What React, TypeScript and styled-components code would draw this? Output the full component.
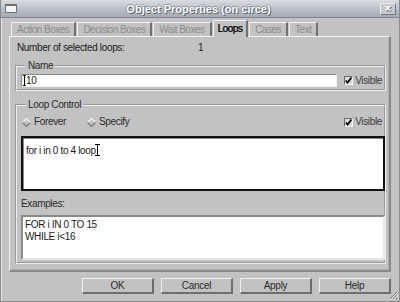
import React from "react";
import styled, { createGlobalStyle } from "styled-components";

const GlobalStyle = createGlobalStyle`
  html, body {
    margin: 0;
    padding: 0;
    background: #c0c0c0;
  }
  body {
    font-family: "Liberation Sans", Arial, Helvetica, sans-serif;
    font-size: 10px;
    letter-spacing: -0.35px;
    color: #1a1a1a;
  }
  * {
    box-sizing: border-box;
  }
`;

const Window = styled.div`
  position: relative;
  width: 400px;
  height: 302px;
  background: #c2c2c2;
  border: 1px solid #8a8a8a;
  border-top: none;
  display: flex;
  flex-direction: column;
  overflow: hidden;
`;

const TitleBar = styled.div`
  height: 18px;
  display: flex;
  align-items: center;
  padding: 0 3px 0 4px;
  background: linear-gradient(#dadde2, #b9bec7 55%, #a5acb7);
  border-bottom: 1px solid #7d838c;
`;

const WinIcon = styled.div`
  width: 12px;
  height: 9px;
  background: #f4f4f4;
  border: 1px solid #6c717a;
  border-top-width: 2px;
`;

const Title = styled.div`
  flex: 1;
  text-align: center;
  font-size: 11px;
  font-weight: bold;
  letter-spacing: 0;
  color: #ffffff;
  text-shadow: 1px 1px 0 #5c6370, -1px 0 0 #8d94a0, 0 -1px 0 #8d94a0;
`;

const CloseBtn = styled.div`
  width: 16px;
  height: 12px;
  display: flex;
  align-items: center;
  justify-content: center;
  border: 1px solid #eef0f3;
  border-right-color: #6f7680;
  border-bottom-color: #6f7680;
  background: #c5cad2;
  color: #ffffff;
  font-size: 11px;
  font-weight: bold;
  letter-spacing: 0;
  text-shadow: 1px 1px 0 #5c6370;
  line-height: 1;
`;

const Body = styled.div`
  flex: 1;
  display: flex;
  flex-direction: column;
  padding: 0 8px 0 7px;
  border-left: 1px solid #e8e8e8;
`;

const TabRow = styled.div`
  display: flex;
  align-items: flex-end;
  height: 17px;
  margin-top: 1px;
  padding-left: 2px;
  gap: 1px;
  position: relative;
  z-index: 1;
`;

const Tab = styled.div<{ $active?: boolean }>`
  height: ${(p) => (p.$active ? 17 : 14)}px;
  margin-bottom: ${(p) => (p.$active ? -1 : 0)}px;
  padding: ${(p) => (p.$active ? "2px 4px 0" : "1px 5px 0")};
  background: #c2c2c2;
  border-top: 1px solid #f2f2f2;
  border-left: 1px solid #f2f2f2;
  border-right: 2px solid #707070;
  color: ${(p) => (p.$active ? "#161616" : "#8a8a8a")};
  text-shadow: ${(p) => (p.$active ? "0.3px 0 0 #161616" : "none")};
  letter-spacing: -0.5px;
  line-height: 12px;
  white-space: nowrap;
`;

const Panel = styled.div`
  height: 236px;
  border-top: 1px solid #f2f2f2;
  border-left: 1px solid #f2f2f2;
  border-right: 2px solid #8a8a8a;
  border-bottom: 2px solid #8a8a8a;
  box-shadow: inset -1px -1px 0 #b0b0b0;
  padding: 5px 3px 0 5px;
  display: flex;
  flex-direction: column;
`;

const InfoRow = styled.div`
  display: flex;
  height: 12px;
  line-height: 12px;
  padding-left: 2px;
`;

const InfoLabel = styled.span`
  width: 181px;
`;

const Group = styled.fieldset<{ $gap: number }>`
  margin: ${(p) => p.$gap}px 0 0 0;
  padding: 2px 2px 2px 4px;
  border: 2px groove #eeeeee;
  min-width: 0;
`;

const Legend = styled.legend`
  margin-left: 5px;
  padding: 0 2px;
  line-height: 12px;
  color: #2a2a2a;
`;

const Row = styled.div`
  display: flex;
  align-items: center;
`;

const TextInput = styled.div`
  width: 316px;
  height: 13px;
  background: #ffffff;
  border-top: 1px solid #8a8a8a;
  border-left: 1px solid #8a8a8a;
  border-bottom: 1px solid #f4f4f4;
  border-right: 1px solid #f4f4f4;
  display: flex;
  align-items: center;
  padding-left: 2px;
  line-height: 11px;
`;

const CheckWrap = styled.label`
  display: flex;
  align-items: center;
  gap: 2px;
  margin-left: auto;
  color: #3a3a3a;
  line-height: 12px;
`;

const Box = styled.span`
  width: 9px;
  height: 9px;
  display: inline-flex;
  background: #dcdcdc;
  border-top: 1px solid #6a6a6a;
  border-left: 1px solid #6a6a6a;
  border-bottom: 1px solid #f4f4f4;
  border-right: 1px solid #f4f4f4;
`;

const RadioRow = styled.div`
  display: flex;
  align-items: center;
  height: 14px;
  margin-top: 2px;
  padding-left: 1px;
`;

const Radio = styled.label<{ $w?: number }>`
  display: flex;
  align-items: center;
  gap: 3px;
  width: ${(p) => p.$w ?? 60}px;
  line-height: 12px;
  color: #2a2a2a;
`;

const Editor = styled.div`
  margin-top: 7px;
  width: 364px;
  height: 55px;
  background: #ffffff;
  border: 2px solid #101010;
  box-shadow: inset 1px 1px 0 #8a8a8a;
  padding: 6px 3px;
  line-height: 12px;
  color: #1a1a1a;
`;

const Caret = styled.svg`
  vertical-align: -2px;
  margin-left: -1px;
`;

const SmallLabel = styled.div`
  margin-top: 7px;
  height: 12px;
  line-height: 12px;
  color: #2a2a2a;
`;

const Examples = styled.div`
  margin-top: 5px;
  width: 364px;
  height: 45px;
  background: #ffffff;
  border-top: 2px solid #8a8a8a;
  border-left: 2px solid #8a8a8a;
  border-bottom: 2px solid #e6e6e6;
  border-right: 2px solid #e6e6e6;
  padding: 2px 2px;
  line-height: 12px;
  color: #1a1a1a;
`;

const ButtonRow = styled.div`
  display: flex;
  justify-content: flex-end;
  gap: 7px;
  margin-top: 6px;
`;

const Button = styled.button`
  width: 72px;
  height: 16px;
  padding: 0;
  font: inherit;
  letter-spacing: -0.3px;
  color: #2a2a2a;
  background: #c2c2c2;
  border-top: 1px solid #f2f2f2;
  border-left: 1px solid #f2f2f2;
  border-right: 2px solid #6e6e6e;
  border-bottom: 2px solid #6e6e6e;
`;

const Grip = styled.svg`
  position: absolute;
  right: 1px;
  bottom: 1px;
`;

const Diamond = () => (
  <svg width="9" height="9" viewBox="0 0 9 9">
    <polygon points="4.5,0.5 8.5,4.5 4.5,8.5 0.5,4.5" fill="#c2c2c2" />
    <polyline points="0.5,4.5 4.5,0.5 8.5,4.5" fill="none" stroke="#f4f4f4" strokeWidth="1.2" />
    <polyline points="0.5,4.5 4.5,8.5 8.5,4.5" fill="none" stroke="#7a7a7a" strokeWidth="1.2" />
  </svg>
);

const Check = () => (
  <Box>
    <svg width="7" height="7" viewBox="0 0 7 7">
      <path d="M0.8 3.4 L2.6 5.6 L6.4 0.6" fill="none" stroke="#000" strokeWidth="1.6" />
    </svg>
  </Box>
);

const Visible = () => (
  <CheckWrap>
    <Check />
    Visible
  </CheckWrap>
);

const tabs = ["Action Boxes", "Decision Boxes", "Wait Boxes", "Loops", "Cases", "Text"];
const buttons = ["OK", "Cancel", "Apply", "Help"];

export default function App() {
  return (
    <>
      <GlobalStyle />
      <Window>
        <TitleBar>
          <WinIcon />
          <Title>Object Properties (on circe)</Title>
          <CloseBtn>×</CloseBtn>
        </TitleBar>
        <Body>
          <TabRow>
            {tabs.map((t) => (
              <Tab key={t} $active={t === "Loops"}>
                {t}
              </Tab>
            ))}
          </TabRow>
          <Panel>
            <InfoRow>
              <InfoLabel>Number of selected loops:</InfoLabel>
              <span>1</span>
            </InfoRow>
            <Group $gap={6}>
              <Legend>Name</Legend>
              <Row>
                <TextInput>
                  <Caret width="3" height="11" viewBox="0 0 3 11">
                    <path d="M0 0.5 H3 M1.5 0.5 V10.5 M0 10.5 H3" stroke="#000" strokeWidth="1" />
                  </Caret>
                  10
                </TextInput>
                <Visible />
              </Row>
            </Group>
            <Group $gap={8}>
              <Legend>Loop Control</Legend>
              <RadioRow>
                <Radio $w={65}>
                  <Diamond />
                  Forever
                </Radio>
                <Radio>
                  <Diamond />
                  Specify
                </Radio>
                <Visible />
              </RadioRow>
              <Editor>
                for i in 0 to 4 loop
                <Caret width="5" height="12" viewBox="0 0 5 12">
                  <path d="M0 0.5 H5 M2.5 0.5 V11.5 M0 11.5 H5" stroke="#000" strokeWidth="1" />
                </Caret>
              </Editor>
              <SmallLabel>Examples:</SmallLabel>
              <Examples>
                FOR i IN 0 TO 15
                <br />
                WHILE i&lt;16
              </Examples>
            </Group>
          </Panel>
          <ButtonRow>
            {buttons.map((b) => (
              <Button key={b}>{b}</Button>
            ))}
          </ButtonRow>
        </Body>
        <Grip width="9" height="9" viewBox="0 0 9 9">
          <path d="M8 1 L1 8 M8 4 L4 8 M8 7 L7 8" stroke="#6e6e6e" strokeWidth="1" />
          <path d="M9 1 L1 9 M9 4 L4 9" stroke="#f0f0f0" strokeWidth="1" />
        </Grip>
      </Window>
    </>
  );
}
